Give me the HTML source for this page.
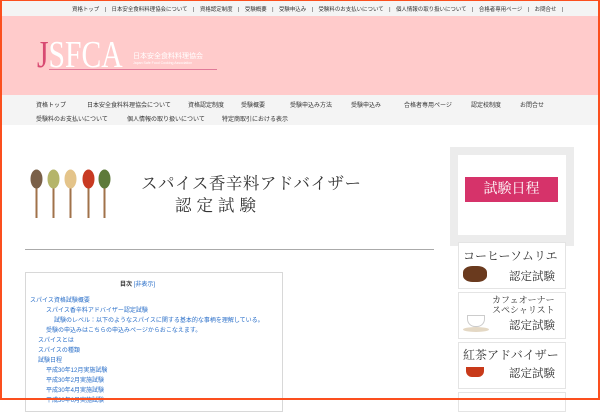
<!DOCTYPE html>
<html><head><meta charset="utf-8"><style>
*{margin:0;padding:0;box-sizing:border-box}
body{width:600px;height:400px;overflow:hidden;background:#fff;font-family:"Liberation Sans","Noto Sans CJK JP",sans-serif;position:relative}
.frame{position:absolute;inset:0;border:2px solid #fb4f1e;border-top-width:1px;z-index:10;pointer-events:none}
.abs{position:absolute;white-space:nowrap}
.top{position:absolute;left:0;top:0;width:600px;height:16px;background:#f4f4f4;font-size:5.5px;color:#333}
.hdr{position:absolute;left:0;top:16px;width:600px;height:79px;background:#ffcbcb}
.nav{position:absolute;left:0;top:95px;width:600px;height:30px;background:#f4f4f4;font-size:6px;color:#333}
.serif{font-family:"Liberation Serif","Noto Serif CJK SC",serif}
.toc a{color:#2a6fc9;text-decoration:none}
.card{position:absolute;left:458px;width:108px;background:#fff;border:1px solid #e4e4e4}
</style></head><body>
<div class="frame"></div>
<div class="top">
<span class="abs" style="left:72px;top:5px;transform:scaleX(0.99);transform-origin:left">資格トップ　|　日本安全食料料理協会について　|　資格認定制度　|　受験概要　|　受験申込み　|　受験料のお支払いについて　|　個人情報の取り扱いについて　|　合格者専用ページ　|　お問合せ　|</span>
</div>
<div class="hdr">
<span class="abs serif" style="left:37px;top:20px;font-size:38px;color:#fff;line-height:38px;transform:scaleX(0.78);transform-origin:left"><span style="color:#d84a72">J</span>SFCA</span>
<span class="abs" style="left:133px;top:35px;font-size:7px;color:#fff">日本安全食料料理協会</span>
<span class="abs" style="left:133px;top:45px;font-size:3.5px;color:#fff">Japan Safe Food Cooking Association</span>
<div class="abs" style="left:49px;top:53px;width:168px;height:1px;background:#e07a98"></div>
</div>
<div class="nav">
<span class="abs" style="left:36px;top:5px">資格トップ</span>
<span class="abs" style="left:87px;top:5px">日本安全食料料理協会について</span>
<span class="abs" style="left:188px;top:5px">資格認定制度</span>
<span class="abs" style="left:241px;top:5px">受験概要</span>
<span class="abs" style="left:290px;top:5px">受験申込み方法</span>
<span class="abs" style="left:351px;top:5px">受験申込み</span>
<span class="abs" style="left:404px;top:5px">合格者専用ページ</span>
<span class="abs" style="left:471px;top:5px">認定校制度</span>
<span class="abs" style="left:520px;top:5px">お問合せ</span>
<span class="abs" style="left:36px;top:19px">受験料のお支払いについて</span>
<span class="abs" style="left:127px;top:19px">個人情報の取り扱いについて</span>
<span class="abs" style="left:222px;top:19px">特定商取引における表示</span>
</div>
<svg class="abs" style="left:25px;top:168px" width="90" height="54">
<g fill="#a0724a">
<rect x="10.5" y="20" width="2" height="30"/><rect x="27.5" y="20" width="2" height="30"/><rect x="44.5" y="20" width="2" height="30"/><rect x="62.5" y="20" width="2" height="30"/><rect x="78.5" y="20" width="2" height="30"/></g>
<ellipse cx="11.5" cy="11" rx="6" ry="9.5" fill="#7a6048"/>
<ellipse cx="28.5" cy="11" rx="6" ry="9.5" fill="#b5b56a"/>
<ellipse cx="45.5" cy="11" rx="6" ry="9.5" fill="#e4c48a"/>
<ellipse cx="63.5" cy="11" rx="6" ry="9.5" fill="#c83a22"/>
<ellipse cx="79.5" cy="11" rx="6" ry="9.5" fill="#5e7a3a"/>
</svg>
<span class="abs serif" style="left:141px;top:170px;font-size:16.5px;color:#333;letter-spacing:0.5px">スパイス香辛料アドバイザー</span>
<span class="abs serif" style="left:175px;top:192px;font-size:16.5px;color:#333;letter-spacing:5px">認定試験</span>
<div class="abs" style="left:25px;top:249px;width:409px;height:1px;background:#aaa"></div>
<div class="abs" style="left:450px;top:147px;width:124px;height:99px;background:#ececec"></div>
<div class="abs" style="left:458px;top:155px;width:108px;height:80px;background:#fff"></div>
<div class="abs serif" style="left:465px;top:177px;width:93px;height:25px;background:#d6336a;color:#fff;font-size:14px;text-align:center;line-height:25px">試験日程</div>
<div class="card serif" style="top:242px;height:47px"><span class="abs" style="left:4px;top:4px;font-size:12px;color:#333">コーヒーソムリエ</span><span class="abs" style="left:50px;top:25px;font-size:11.5px;color:#333">認定試験</span><div class="abs" style="left:4px;top:23px;width:24px;height:16px;background:#6a3a1e;border-radius:40%"></div></div>
<div class="card serif" style="top:292px;height:47px"><span class="abs" style="left:33px;top:2px;font-size:9px;color:#333;line-height:10px;text-align:center">カフェオーナー<br>スペシャリスト</span><span class="abs" style="left:50px;top:24px;font-size:11.5px;color:#333">認定試験</span><div class="abs" style="left:8px;top:22px;width:18px;height:12px;background:#fff;border:1px solid #ccc;border-radius:0 0 8px 8px"></div><div class="abs" style="left:4px;top:34px;width:26px;height:5px;background:#e4d8c4;border-radius:50%"></div></div>
<div class="card serif" style="top:342px;height:47px"><span class="abs" style="left:4px;top:3px;font-size:12px;color:#333">紅茶アドバイザー</span><span class="abs" style="left:50px;top:22px;font-size:11.5px;color:#333">認定試験</span><div class="abs" style="left:7px;top:24px;width:18px;height:10px;background:#c83a1a;border-radius:0 0 6px 6px"></div></div>
<div class="card" style="top:392px;height:20px"></div>
<div class="abs toc" style="left:25px;top:272px;width:258px;height:140px;border:1px solid #d8d8d8;font-size:6px;background:#fff">
<span class="abs" style="left:94px;top:6px;color:#333;font-weight:bold">目次 <a style="font-weight:normal">[非表示]</a></span>
<a class="abs" style="left:4px;top:22px">スパイス資格試験概要</a>
<a class="abs" style="left:20px;top:32px">スパイス香辛料アドバイザー認定試験</a>
<a class="abs" style="left:28px;top:42px">試験のレベル：以下のようなスパイスに関する基本的な事柄を理解している。</a>
<a class="abs" style="left:20px;top:52px">受験の申込みはこちらの申込みページからおこなえます。</a>
<a class="abs" style="left:12px;top:62px">スパイスとは</a>
<a class="abs" style="left:12px;top:72px">スパイスの種類</a>
<a class="abs" style="left:12px;top:82px">試験日程</a>
<a class="abs" style="left:20px;top:92px">平成30年12月実施試験</a>
<a class="abs" style="left:20px;top:102px">平成30年2月実施試験</a>
<a class="abs" style="left:20px;top:112px">平成30年4月実施試験</a>
<a class="abs" style="left:20px;top:122px">平成30年6月実施試験</a>
</div>
</body></html>
